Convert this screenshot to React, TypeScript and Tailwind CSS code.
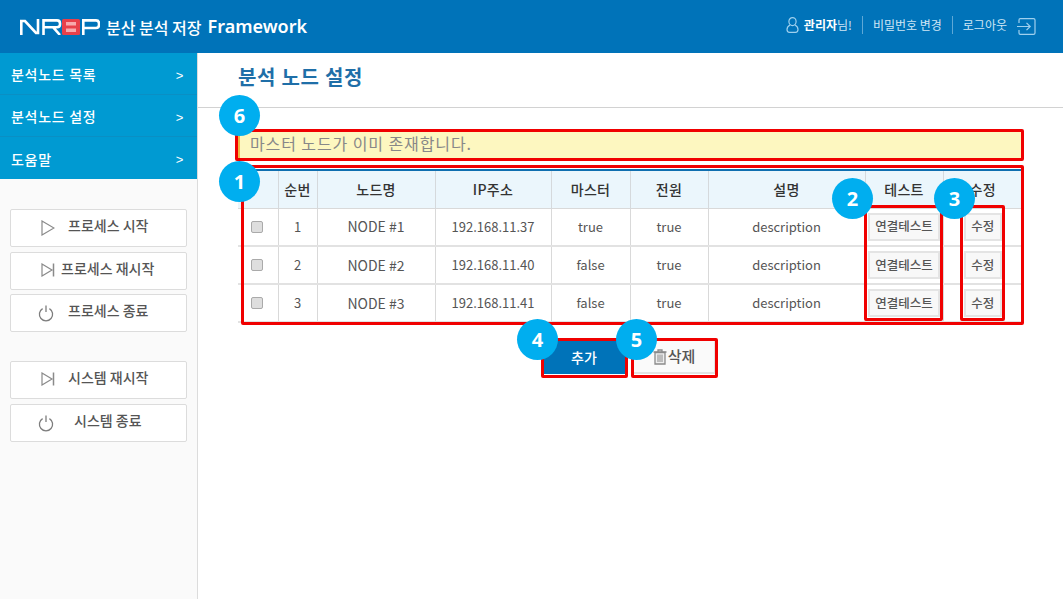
const font = "font-['Noto_Sans_CJK_KR','Noto_Sans',sans-serif]";

const menus = ['분석노드 목록', '분석노드 설정', '도움말'];

const nodes = [
  { no: 1, name: 'NODE #1', ip: '192.168.11.37', master: 'true' },
  { no: 2, name: 'NODE #2', ip: '192.168.11.40', master: 'false' },
  { no: 3, name: 'NODE #3', ip: '192.168.11.41', master: 'false' },
];

function Logo() {
  return (
    <svg width="80" height="16" viewBox="0 0 80 16" fill="none" stroke="#fff" strokeWidth="2.6">
      <path d="M1.3 16 V2 H5 L16 14 H18 V0" />
      <path d="M23.5 16 V1.4 H37 Q40 1.4 40 4.5 V5.5 Q40 8.2 37 8.2 H24 M33 8.2 L40 16" />
      <rect x="42" y="0" width="18" height="16" rx="1.5" fill="#e8404a" stroke="none" />
      <path d="M46 3 H56 V6.4 H46 Z M46 9.6 H56 V13 H46 Z" fill="#f7a9ad" stroke="none" />
      <path d="M63.3 16 V1.4 H76 Q79 1.4 79 4.5 V6 Q79 9 76 9 H64" />
    </svg>
  );
}

function UserIcon() {
  return (
    <svg width="13" height="16" viewBox="0 0 13 16" fill="none" stroke="#9fd0ee" strokeWidth="1.2">
      <ellipse cx="6.5" cy="4.6" rx="3.6" ry="4" />
      <path d="M4 8 Q1 9.5 1 12.5 Q1 15.3 3.5 15.3 H9.5 Q12 15.3 12 12.5 Q12 9.5 9 8" />
    </svg>
  );
}

function LogoutIcon() {
  return (
    <svg width="19" height="17" viewBox="0 0 19 17" fill="none" stroke="#9fd0ee" strokeWidth="1.2">
      <path d="M2 5 V2 Q2 0.7 3.3 0.7 H16.5 Q18 0.7 18 2 V15 Q18 16.3 16.5 16.3 H3.3 Q2 16.3 2 15 V12" />
      <path d="M0 8.5 H13 M9.5 4.8 L13.2 8.5 L9.5 12.2" />
    </svg>
  );
}

function PowerIcon() {
  return (
    <svg width="16" height="17" viewBox="0 0 16 17" fill="none" stroke="#7d7d7d" strokeWidth="1.3">
      <path d="M4.6 3.6 A6.6 6.6 0 1 0 11.4 3.6" />
      <path d="M8 0.5 V7" />
    </svg>
  );
}

function PlayIcon() {
  return (
    <svg width="14" height="16" viewBox="0 0 14 16" fill="none" stroke="#8a8a8a" strokeWidth="1.2">
      <path d="M1 1 L13 8 L1 15 Z" />
    </svg>
  );
}

function RestartIcon() {
  return (
    <svg width="14" height="14" viewBox="0 0 14 14" fill="none" stroke="#8a8a8a" strokeWidth="1.2">
      <path d="M1 1 L11 7 L1 13 Z" />
      <path d="M12.5 0.5 V13.5" strokeWidth="1.5" />
    </svg>
  );
}

function TrashIcon() {
  return (
    <svg width="14" height="16" viewBox="0 0 14 16" fill="none" stroke="#8a8a8a" strokeWidth="1.3">
      <path d="M0.5 3 H13.5 M5 3 V1 H9 V3" />
      <path d="M2 3.5 H12 V15 H2 Z" fill="#eee" />
      <path d="M5 5.5 V13 M7 5.5 V13 M9 5.5 V13" strokeWidth="1" />
    </svg>
  );
}

function SideButton({ icon, label, iconLeft, labelLeft }: { icon: 'play' | 'restart' | 'power'; label: string; iconLeft: string; labelLeft: string }) {
  return (
    <div className="relative h-[38px] w-[177px] rounded-[2px] border border-[#dcdcdc] bg-white text-[14px] font-medium text-[#555]">
      <span className={`absolute top-[10px] ${iconLeft}`}>
        {icon === 'play' && <PlayIcon />}
        {icon === 'restart' && <RestartIcon />}
        {icon === 'power' && <PowerIcon />}
      </span>
      <span className={`absolute top-[5px] ${labelLeft}`}>{label}</span>
    </div>
  );
}

function Badge({ n, className }: { n: number; className: string }) {
  return (
    <div className={`absolute flex h-[41px] w-[41px] items-center justify-center rounded-full bg-[#00aeef] text-[20px] font-bold text-white font-['Open_Sans',sans-serif] ${className}`}>
      {n}
    </div>
  );
}

function RedBox({ className }: { className: string }) {
  return <div className={`pointer-events-none absolute rounded-[2px] border-[3px] border-[#f00000] ${className}`} />;
}

export default function App() {
  const th = 'border-r border-[#d5d9dc] bg-[#ebf6fc] text-center text-[14px] font-medium tracking-[0.3px] text-[#333]';
  const td = 'border-r border-[#d9d9d9] text-center text-[13px] text-[#555]';
  const btn = 'inline-flex h-[28px] items-center justify-center border-2 border-[#e4e4e4] bg-[#f8f8f8] text-[12.5px] font-medium text-[#555]';

  return (
    <div className={`relative h-[599px] w-[1063px] overflow-hidden bg-white ${font}`}>
      {/* Header */}
      <header className="flex h-[53px] items-center justify-between bg-[#0073b9] pl-[20px] pr-[27px]">
        <div className="flex items-center">
          <Logo />
          <span className="ml-[6px] text-[16px] font-medium text-white">분산 분석 저장</span>
          <span className="ml-[6px] text-[18px] font-semibold text-white font-['Noto_Sans',sans-serif]">Framework</span>
        </div>
        <div className="mb-[4px] flex items-center text-[12px] text-[#cfe6f5]">
          <UserIcon />
          <span className="ml-[5px] font-bold text-white">관리자</span>
          <span>님!</span>
          <span className="mx-[10px] h-[18px] w-px bg-[#5ea8d6]" />
          <span>비밀번호 변경</span>
          <span className="mx-[10px] h-[18px] w-px bg-[#5ea8d6]" />
          <span>로그아웃</span>
          <span className="ml-[10px] mt-[4px]">
            <LogoutIcon />
          </span>
        </div>
      </header>

      <div className="flex h-[546px]">
        {/* Sidebar */}
        <aside className="h-full w-[198px] shrink-0 border-r border-[#dcdcdc] bg-[#fafafa]">
          <nav className="bg-[#009ad2]">
            {menus.map((m) => (
              <div key={m} className="flex h-[42px] items-center justify-between border-b border-[#0a8fc4] pl-[11px] pr-[13px] pt-[2px] text-[14px] font-medium tracking-[0.7px] text-white last:border-b-0">
                <span>{m}</span>
                <span className="mt-[2px] font-['Liberation_Sans',sans-serif] text-[13px]">&gt;</span>
              </div>
            ))}
          </nav>
          <div className="mt-[30px] flex flex-col gap-[4.5px] pl-[10px]">
            <SideButton icon="play" label="프로세스 시작" iconLeft="left-[30px]" labelLeft="left-[57px]" />
            <SideButton icon="restart" label="프로세스 재시작" iconLeft="left-[30px]" labelLeft="left-[50px]" />
            <SideButton icon="power" label="프로세스 종료" iconLeft="left-[27px]" labelLeft="left-[57px]" />
            <div className="h-[20px]" />
            <SideButton icon="restart" label="시스템 재시작" iconLeft="left-[30px]" labelLeft="left-[57px]" />
            <SideButton icon="power" label="시스템 종료" iconLeft="left-[27px]" labelLeft="left-[63px]" />
          </div>
        </aside>

        {/* Main */}
        <main className="flex-1">
          <div className="h-[55px] border-b border-[#d2d2d2] pl-[40px] pt-[9px] text-[20px] font-bold leading-[30px] tracking-[0.7px] text-[#1f6fa8]">
            분석 노드 설정
          </div>
          <div className="pl-[40px] pr-[41px] pt-[22px]">
            <div className="flex h-[30px] items-center border-l-2 border-[#f0b840] bg-[#fdf7c0] pb-[4px] pl-[10px] text-[16px] leading-none tracking-[0.9px] text-[#888]">
              마스터 노드가 이미 존재합니다.
            </div>
            <table className="mt-[9px] w-[784px] table-fixed border-collapse border-t-[2px] border-[#0f6fb0]">
              <colgroup>
                <col className="w-[40px]" />
                <col className="w-[39px]" />
                <col className="w-[118px]" />
                <col className="w-[116px]" />
                <col className="w-[79px]" />
                <col className="w-[78px]" />
                <col className="w-[157px]" />
                <col className="w-[78px]" />
                <col className="w-[79px]" />
              </colgroup>
              <thead>
                <tr className="h-[38px] border-b border-[#d9d9d9]">
                  <th className={th} />
                  <th className={th}>순번</th>
                  <th className={th}>노드명</th>
                  <th className={th}>IP주소</th>
                  <th className={th}>마스터</th>
                  <th className={th}>전원</th>
                  <th className={th}>설명</th>
                  <th className={th}>테스트</th>
                  <th className={`${th} border-r-0`}>수정</th>
                </tr>
              </thead>
              <tbody>
                {nodes.map((n) => (
                  <tr key={n.no} className="h-[38px] border-b-2 border-[#e2e2e2]">
                    <td className={`${td} pb-[3px] pr-[2px]`}>
                      <span className="inline-block h-[12px] w-[12px] rounded-[2px] border border-[#aaa] bg-[#dedede] align-middle" />
                    </td>
                    <td className={td}>{n.no}</td>
                    <td className={`${td} text-[14px]`}>{n.name}</td>
                    <td className={td}>{n.ip}</td>
                    <td className={td}>{n.master}</td>
                    <td className={td}>true</td>
                    <td className={td}>description</td>
                    <td className={td}>
                      <span className={`${btn} w-[72px]`}>연결테스트</span>
                    </td>
                    <td className={`${td} border-r-0`}>
                      <span className={`${btn} w-[38px]`}>수정</span>
                    </td>
                  </tr>
                ))}
              </tbody>
            </table>
            <div className="mt-[17px] flex justify-center gap-[8px] pr-[2px]">
              <div className="flex h-[34px] w-[82px] items-center justify-center bg-[#0073b9] text-[14px] font-medium text-white">추가</div>
              <div className="flex h-[34px] w-[82px] items-center justify-center gap-[1px] border border-b-2 border-[#e2e2e2] bg-[#fafafa] text-[15px] font-medium text-[#555]">
                <TrashIcon />
                삭제
              </div>
            </div>
          </div>
        </main>
      </div>

      {/* Annotations drawn over the screenshot */}
      <RedBox className="left-[235px] top-[129px] h-[32px] w-[789px]" />
      <RedBox className="left-[241px] top-[165px] h-[160px] w-[783px]" />
      <RedBox className="left-[864px] top-[205px] h-[116px] w-[79px]" />
      <RedBox className="left-[960px] top-[205px] h-[116px] w-[45px]" />
      <RedBox className="left-[541px] top-[338px] h-[40px] w-[87px]" />
      <RedBox className="left-[631px] top-[338px] h-[40px] w-[87px]" />
      <Badge n={6} className="left-[219px] top-[95px]" />
      <Badge n={1} className="left-[219px] top-[161px]" />
      <Badge n={2} className="left-[832px] top-[178px]" />
      <Badge n={3} className="left-[934px] top-[178px]" />
      <Badge n={4} className="left-[517px] top-[319px]" />
      <Badge n={5} className="left-[616px] top-[319px]" />
    </div>
  );
}
